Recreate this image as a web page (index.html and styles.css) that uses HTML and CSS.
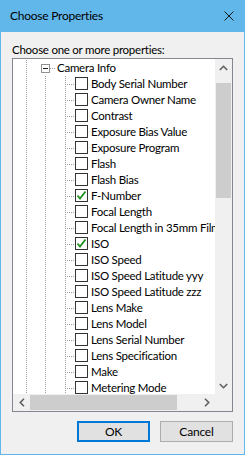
FILE: index.html
```html
<!DOCTYPE html>
<html>
<head>
<meta charset="utf-8">
<link rel="stylesheet" href="styles.css">
</head>
<body>
<div class="window">
  <div class="titlebar">
    <span class="title">Choose Properties</span>
    <svg class="close" width="10" height="10" viewBox="0 0 10 10"><path d="M0.5 0.5 L9.5 9.5 M9.5 0.5 L0.5 9.5" stroke="#1a1a1a" stroke-width="1" fill="none"/></svg>
  </div>
  <div class="content">
    <div class="label">Choose one or more properties:</div>
    <div class="treebox">
      <div class="viewport">
        <div class="tree">
          <div class="row"><i class="g g1"></i><i class="g g2 exp"><span class="expbox"><span class="minus"></span></span></i><span class="tx parent">Camera Info</span></div>
          <div class="row"><i class="g g1"></i><i class="g g2 sib"></i><i class="g g3"></i><span class="cb"></span><span class="tx">Body Serial Number</span></div>
          <div class="row"><i class="g g1"></i><i class="g g2 sib"></i><i class="g g3"></i><span class="cb"></span><span class="tx">Camera Owner Name</span></div>
          <div class="row"><i class="g g1"></i><i class="g g2 sib"></i><i class="g g3"></i><span class="cb"></span><span class="tx">Contrast</span></div>
          <div class="row"><i class="g g1"></i><i class="g g2 sib"></i><i class="g g3"></i><span class="cb"></span><span class="tx">Exposure Bias Value</span></div>
          <div class="row"><i class="g g1"></i><i class="g g2 sib"></i><i class="g g3"></i><span class="cb"></span><span class="tx">Exposure Program</span></div>
          <div class="row"><i class="g g1"></i><i class="g g2 sib"></i><i class="g g3"></i><span class="cb"></span><span class="tx">Flash</span></div>
          <div class="row"><i class="g g1"></i><i class="g g2 sib"></i><i class="g g3"></i><span class="cb"></span><span class="tx">Flash Bias</span></div>
          <div class="row"><i class="g g1"></i><i class="g g2 sib"></i><i class="g g3"></i><span class="cb"><svg width="11" height="11" viewBox="0 0 11 11"><path d="M1.5 5.5 L4 8.5 L9.5 1.5" stroke="#1d8f1d" stroke-width="1.8" fill="none"/></svg></span><span class="tx">F-Number</span></div>
          <div class="row"><i class="g g1"></i><i class="g g2 sib"></i><i class="g g3"></i><span class="cb"></span><span class="tx">Focal Length</span></div>
          <div class="row"><i class="g g1"></i><i class="g g2 sib"></i><i class="g g3"></i><span class="cb"></span><span class="tx">Focal Length in 35mm Film</span></div>
          <div class="row"><i class="g g1"></i><i class="g g2 sib"></i><i class="g g3"></i><span class="cb"><svg width="11" height="11" viewBox="0 0 11 11"><path d="M1.5 5.5 L4 8.5 L9.5 1.5" stroke="#1d8f1d" stroke-width="1.8" fill="none"/></svg></span><span class="tx">ISO</span></div>
          <div class="row"><i class="g g1"></i><i class="g g2 sib"></i><i class="g g3"></i><span class="cb"></span><span class="tx">ISO Speed</span></div>
          <div class="row"><i class="g g1"></i><i class="g g2 sib"></i><i class="g g3"></i><span class="cb"></span><span class="tx">ISO Speed Latitude yyy</span></div>
          <div class="row"><i class="g g1"></i><i class="g g2 sib"></i><i class="g g3"></i><span class="cb"></span><span class="tx">ISO Speed Latitude zzz</span></div>
          <div class="row"><i class="g g1"></i><i class="g g2 sib"></i><i class="g g3"></i><span class="cb"></span><span class="tx">Lens Make</span></div>
          <div class="row"><i class="g g1"></i><i class="g g2 sib"></i><i class="g g3"></i><span class="cb"></span><span class="tx">Lens Model</span></div>
          <div class="row"><i class="g g1"></i><i class="g g2 sib"></i><i class="g g3"></i><span class="cb"></span><span class="tx">Lens Serial Number</span></div>
          <div class="row"><i class="g g1"></i><i class="g g2 sib"></i><i class="g g3"></i><span class="cb"></span><span class="tx">Lens Specification</span></div>
          <div class="row"><i class="g g1"></i><i class="g g2 sib"></i><i class="g g3"></i><span class="cb"></span><span class="tx">Make</span></div>
          <div class="row"><i class="g g1"></i><i class="g g2 sib"></i><i class="g g3"></i><span class="cb"></span><span class="tx">Metering Mode</span></div>
        </div>
      </div>
      <div class="vscroll">
        <div class="sbtn"><svg width="9" height="6" viewBox="0 0 9 6"><path d="M0.8 5 L4.5 1.3 L8.2 5" stroke="#606060" stroke-width="1.6" fill="none"/></svg></div>
        <div class="vtrack"><div class="vthumb"></div></div>
        <div class="sbtn"><svg width="9" height="6" viewBox="0 0 9 6"><path d="M0.8 1 L4.5 4.7 L8.2 1" stroke="#606060" stroke-width="1.6" fill="none"/></svg></div>
      </div>
      <div class="hscroll">
        <div class="sbtn"><svg width="6" height="9" viewBox="0 0 6 9"><path d="M5 0.8 L1.3 4.5 L5 8.2" stroke="#606060" stroke-width="1.6" fill="none"/></svg></div>
        <div class="htrack"><div class="hthumb"></div></div>
        <div class="sbtn"><svg width="6" height="9" viewBox="0 0 6 9"><path d="M1 0.8 L4.7 4.5 L1 8.2" stroke="#606060" stroke-width="1.6" fill="none"/></svg></div>
      </div>
      <div class="corner"></div>
    </div>
    <div class="buttons">
      <button class="btn default">OK</button>
      <button class="btn">Cancel</button>
    </div>
  </div>
</div>
</body>
</html>
```

FILE: styles.css
```css
html, body {
  margin: 0;
  padding: 0;
  background: #f0f0f0;
}
.window {
  width: 245px;
  height: 455px;
  box-sizing: border-box;
  background: #62b7ea;
  padding: 0 1px 1px 1px;
  display: flex;
  flex-direction: column;
  font-family: Lato, "Noto Sans", sans-serif;
  font-size: 11.5px;
  letter-spacing: -0.25px;
  color: #000;
}
.titlebar {
  height: 31px;
  flex: none;
  display: flex;
  align-items: center;
  justify-content: space-between;
  padding: 0 10px 1px 9px;
}
.title {
  color: #000;
  font-size: 12px;
}
.close {
  display: block;
  margin-top: 1px;
}
.content {
  flex: 1;
  background: #f0f0f0;
  padding: 0 0 0 11px;
  display: flex;
  flex-direction: column;
}
.label {
  margin-top: 10px;
  height: 15px;
  line-height: 15px;
  margin-bottom: 1px;
}
.treebox {
  width: 221px;
  height: 354px;
  box-sizing: border-box;
  border: 1px solid #828790;
  background: #fff;
  display: grid;
  grid-template-columns: 202px 17px;
  grid-template-rows: 335px 17px;
}
.viewport {
  overflow: hidden;
  background: #fff;
}
.tree {
  padding-top: 1px;
}
.row {
  height: 16px;
  display: flex;
  align-items: flex-start;
  white-space: nowrap;
}
.g {
  display: block;
  height: 16px;
  flex: none;
}
.g1 {
  width: 23px;
  background: repeating-linear-gradient(to bottom, #a0a0a0 0 1px, transparent 1px 2px) 13px 0 / 1px 16px no-repeat;
}
.g2 {
  width: 19px;
}
.g2.sib {
  background: repeating-linear-gradient(to bottom, #a0a0a0 0 1px, transparent 1px 2px) 9px 0 / 1px 16px no-repeat;
}
.g2.exp {
  background: repeating-linear-gradient(to right, #a0a0a0 0 1px, transparent 1px 2px) 14px 8px / 5px 1px no-repeat;
}
.g3 {
  width: 19px;
  background:
    repeating-linear-gradient(to bottom, #a0a0a0 0 1px, transparent 1px 2px) 10px 0 / 1px 16px no-repeat,
    repeating-linear-gradient(to right, #a0a0a0 0 1px, transparent 1px 2px) 10px 8px / 9px 1px no-repeat;
}
.expbox {
  display: flex;
  align-items: center;
  justify-content: center;
  width: 9px;
  height: 9px;
  box-sizing: border-box;
  border: 1px solid #919191;
  background: #fff;
  margin: 4px 0 0 5px;
}
.minus {
  display: block;
  width: 5px;
  height: 1px;
  background: #1c1c1c;
}
.cb {
  flex: none;
  width: 13px;
  height: 13px;
  box-sizing: border-box;
  border: 1px solid #333;
  background: #fff;
  margin: 1px 0 0 1px;
  display: flex;
  align-items: center;
  justify-content: center;
}
.cb svg {
  display: block;
}
.tx {
  line-height: 16px;
  margin-left: 3px;
}
.tx.parent {
  margin-left: 2px;
}
.vscroll {
  background: #f0f0f0;
  display: flex;
  flex-direction: column;
}
.sbtn {
  flex: none;
  width: 17px;
  height: 17px;
  display: flex;
  align-items: center;
  justify-content: center;
}
.vtrack {
  flex: 1;
  padding: 7px 1px 0 1px;
}
.vthumb {
  height: 115px;
  background: #cdcdcd;
}
.hscroll {
  background: #f0f0f0;
  display: flex;
}
.htrack {
  flex: 1;
  padding: 1px 0 1px 0;
}
.hthumb {
  width: 147px;
  height: 15px;
  background: #cdcdcd;
}
.corner {
  background: #f0f0f0;
}
.buttons {
  width: 221px;
  margin-top: 9px;
  display: flex;
  justify-content: flex-end;
  gap: 10px;
}
.btn {
  width: 73px;
  height: 21px;
  box-sizing: border-box;
  border: 1px solid #adadad;
  background: #e1e1e1;
  font-family: inherit;
  font-size: 12px;
  letter-spacing: -0.2px;
  color: #000;
  padding: 0;
  margin: 0;
}
.btn.default {
  border: 2px solid #0078d7;
}
```
